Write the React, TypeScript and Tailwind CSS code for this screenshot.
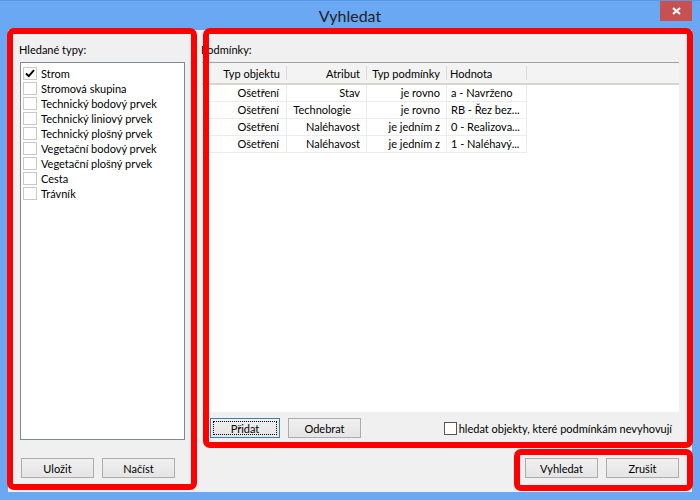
import { ReactNode } from "react";

const objectTypes = [
    { label: "Strom", checked: true },
    { label: "Stromová skupina", checked: false },
    { label: "Technický bodový prvek", checked: false },
    { label: "Technický liniový prvek", checked: false },
    { label: "Technický plošný prvek", checked: false },
    { label: "Vegetační bodový prvek", checked: false },
    { label: "Vegetační plošný prvek", checked: false },
    { label: "Cesta", checked: false },
    { label: "Trávník", checked: false },
];

const conditions = [
    ["Ošetření", "Stav", "je rovno", "a - Navrženo"],
    ["Ošetření", "Technologie", "je rovno", "RB - Řez bez..."],
    ["Ošetření", "Naléhavost", "je jedním z", "0 - Realizova..."],
    ["Ošetření", "Naléhavost", "je jedním z", "1 - Naléhavý..."],
];

const CheckBox = ({ checked, dark }: { checked?: boolean; dark?: boolean }) => (
    <div
        className={
            dark
                ? "w-[13px] h-[13px] border border-[#555] bg-white shrink-0 flex items-center justify-center"
                : "w-[14px] h-[13px] border border-[#c8c8c8] bg-white shrink-0 flex items-center justify-center"
        }
    >
        {checked && (
            <svg width="10" height="9" viewBox="0 0 10 9">
                <path d="M1 4.5 L3.8 7.2 L9 1.2" fill="none" stroke="#000" strokeWidth="1.9" />
            </svg>
        )}
    </div>
);

const Button = ({ children, width, focused }: { children: ReactNode; width: string; focused?: boolean }) => (
    <div
        className={
            (focused ? "border-[#3c7fb1] " : "border-[#acacac] ") +
            width +
            " h-[20px] border bg-gradient-to-b from-[#f0f0f0] to-[#e5e5e5] flex items-center justify-center relative text-black shrink-0"
        }
    >
        {focused && <div className="absolute inset-[2px] border border-dotted border-black" />}
        <span className="leading-none">{children}</span>
    </div>
);

const RedFrame = ({ className }: { className: string }) => (
    <div className={"absolute border-[6px] border-[#ff0000] rounded-[7px] pointer-events-none " + className} />
);

const App = () => {
    return (
        <div className="w-[700px] h-[500px] bg-[#6aa8f4] border-t border-[#5a97e0] relative overflow-hidden flex flex-col font-['Lato',sans-serif] text-[11px] text-black">
            <div className="h-[29px] flex items-start shrink-0">
                <div className="w-[40px]" />
                <div className="flex-1 text-center text-[16px] leading-[30px] text-[#222]">Vyhledat</div>
                <div className="w-[32px] h-[20px] bg-[#c75050] flex items-center justify-center">
                    <svg width="9" height="8" viewBox="0 0 9 8">
                        <path d="M1 1 L8 7 M8 1 L1 7" stroke="#fff" strokeWidth="2.2" />
                    </svg>
                </div>
                <div className="w-[8px]" />
            </div>

            <div className="mx-[8px] h-[462px] bg-[#f0f0f0] pt-[14px] pl-[12px] pr-[13px] flex flex-col">
                <div className="flex gap-[17px] h-[396px]">
                    <div className="w-[165px] flex flex-col">
                        <div className="h-[18px] -ml-px leading-[12px]">Hledané typy:</div>
                        <div className="h-[378px] border border-[#828790] bg-white pt-[3px] pl-[2px]">
                            {objectTypes.map((t) => (
                                <div key={t.label} className="h-[15px] flex items-center gap-[4px]">
                                    <CheckBox checked={t.checked} />
                                    <span className="leading-none whitespace-nowrap">{t.label}</span>
                                </div>
                            ))}
                        </div>
                    </div>

                    <div className="flex-1 flex flex-col">
                        <div className="h-[18px] -ml-px leading-[12px]">Podmínky:</div>
                        <div className="h-[350px] bg-white border-t border-[#a0a0a0]">
                            <div className="h-[22px] flex bg-[#f3f3f3] border-b-[2px] border-[#d8d5cc] whitespace-nowrap">
                                <div className="w-[85px] text-right pr-[6px] leading-[15px] border-r border-[#dcdcdc] my-[3px]">Typ objektu</div>
                                <div className="w-[80px] text-right pr-[6px] leading-[15px] border-r border-[#dcdcdc] my-[3px]">Atribut</div>
                                <div className="w-[80px] text-right pr-[6px] leading-[15px] border-r border-[#dcdcdc] my-[3px]">Typ podmínky</div>
                                <div className="w-[80px] pl-[3px] leading-[15px] border-r border-[#dcdcdc] my-[3px]">Hodnota</div>
                            </div>
                            {conditions.map((r, i) => (
                                <div key={i} className="h-[17px] flex whitespace-nowrap">
                                    <div className="w-[85px] text-right pr-[7px] leading-[16px] border-r border-b border-[#ececec]">{r[0]}</div>
                                    <div className={"w-[80px] text-right leading-[16px] border-r border-b border-[#ececec] " + (r[1] === "Technologie" ? "pr-[15px]" : "pr-[6px]")}>{r[1]}</div>
                                    <div className="w-[80px] text-right pr-[6px] leading-[16px] border-r border-b border-[#ececec]">{r[2]}</div>
                                    <div className="w-[80px] pl-[4px] leading-[16px] border-r border-b border-[#ececec] overflow-hidden">{r[3]}</div>
                                </div>
                            ))}
                        </div>
                        <div className="mt-[6px] h-[20px] flex items-center pl-[8px] pr-[7px]">
                            <Button width="w-[70px]" focused>Přidat</Button>
                            <div className="w-[8px]" />
                            <Button width="w-[73px]">Odebrat</Button>
                            <div className="flex-1" />
                            <div className="flex items-center gap-[2px]">
                                <CheckBox dark />
                                <span className="leading-none whitespace-nowrap">hledat objekty, které podmínkám nevyhovují</span>
                            </div>
                        </div>
                    </div>
                </div>

                <div className="mt-[18px] h-[20px] flex">
                    <div className="ml-px flex gap-[8px]">
                        <Button width="w-[73px]">Uložit</Button>
                        <Button width="w-[73px]">Načíst</Button>
                    </div>
                    <div className="flex-1" />
                    <div className="flex gap-[8px]">
                        <Button width="w-[73px]">Vyhledat</Button>
                        <Button width="w-[73px]">Zrušit</Button>
                    </div>
                </div>
            </div>

            <RedFrame className="left-[7px] top-[27px] w-[190px] h-[462px]" />
            <RedFrame className="left-[203px] top-[27px] w-[490px] h-[420px]" />
            <RedFrame className="left-[514px] top-[448px] w-[179px] h-[42px]" />
        </div>
    );
};

export default App;
